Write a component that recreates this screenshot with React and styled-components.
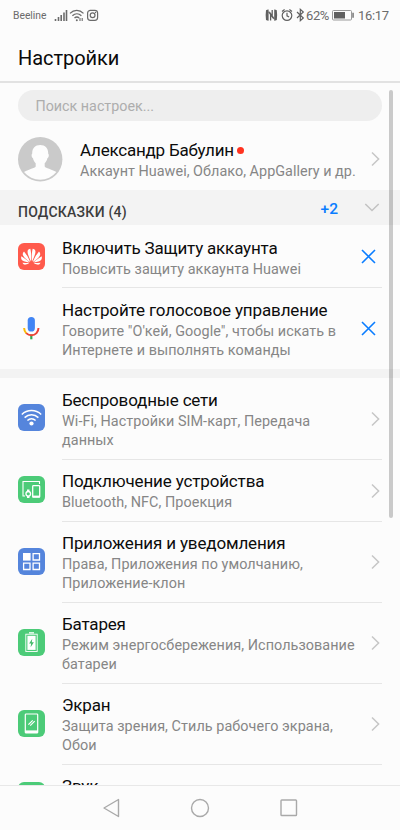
import React from "react";
import styled, { createGlobalStyle } from "styled-components";

const GlobalStyle = createGlobalStyle`
  * { box-sizing: border-box; }
  html, body { margin: 0; padding: 0; }
  body { background: #fcfcfc; font-family: Roboto, "Noto Sans", sans-serif; overflow: hidden; }
  svg { display: block; flex: none; }
`;

const Screen = styled.div`
  position: relative;
  width: 400px;
  height: 830px;
  display: flex;
  flex-direction: column;
  background: #fcfcfc;
  overflow: hidden;
`;

const StatusBar = styled.div`
  height: 30px;
  flex: none;
  display: flex;
  align-items: center;
  justify-content: space-between;
  padding: 0 11px 0 13px;
  color: #6b6b6b;
`;

const StatusGroup = styled.div`
  display: flex;
  align-items: center;
`;

const Carrier = styled.span`
  font-size: 10.3px;
  line-height: 31px;
  width: 41px;
  white-space: nowrap;
`;

const StatusText = styled.span`
  font-size: 13px;
  line-height: 31px;
  width: ${(p) => p.$width}px;
  margin-left: ${(p) => p.$gap || 0}px;
  letter-spacing: ${(p) => p.$spacing || 0}px;
  white-space: nowrap;
`;

const Header = styled.header`
  height: 53px;
  flex: none;
  padding: 15px 18px 0;
  border-bottom: 2px solid #e2e2e2;
`;

const Title = styled.h1`
  margin: 0;
  font-size: 20px;
  line-height: 27px;
  font-weight: 400;
  color: #0a0a0a;
  letter-spacing: -0.05px;
`;

const Content = styled.main`
  flex: 1;
  min-height: 0;
  overflow: hidden;
`;

const SearchField = styled.div`
  height: 31px;
  margin: 7px 18px 0;
  padding: 0 17.5px;
  border-radius: 16px;
  background: #eeeeee;
  color: #adadad;
  font-size: 14.3px;
  line-height: 33px;
`;

const Account = styled.div`
  height: 69px;
  display: flex;
  align-items: center;
  padding: 7px 20px 0 18px;
`;

const AccountText = styled.div`
  flex: 1;
  padding: 1px 0 0 17px;
  white-space: nowrap;
`;

const Dot = styled.span`
  display: inline-block;
  width: 7px;
  height: 7px;
  margin-left: 3px;
  border-radius: 50%;
  background: #ff3320;
  vertical-align: 2px;
`;

const SectionHeader = styled.div`
  height: 35px;
  display: flex;
  align-items: center;
  padding: 0 20px 0 18px;
  background: #f3f3f3;
`;

const SectionTitle = styled.h2`
  flex: 1;
  margin: 0;
  padding-top: 8px;
  color: #3c3c3c;
  font-size: 14px;
  line-height: 20px;
  font-weight: 500;
  letter-spacing: 0.25px;
`;

const Count = styled.span`
  margin-right: 26px;
  padding-top: 2px;
  color: #0a7dff;
  font-size: 15.5px;
  font-weight: 500;
`;

const Band = styled.div`
  height: 9px;
  background: #f3f3f3;
`;

const Row = styled.div`
  height: ${(p) => p.$height}px;
  display: flex;
  padding: 0 18px;
`;

const IconCell = styled.div`
  width: 44px;
  flex: none;
  display: flex;
  align-items: center;
  padding-bottom: ${(p) => p.$lift}px;
`;

const RowBody = styled.div`
  flex: 1;
  display: flex;
  align-items: center;
  justify-content: space-between;
  border-bottom: ${(p) => (p.$last ? "0" : "1px")} solid #e6e6e6;
`;

const RowText = styled.div`
  white-space: nowrap;
  padding-top: ${(p) => p.$shift || 0}px;
  padding-bottom: 1px;
`;

const RowTitle = styled.div`
  color: #0c0c0c;
  font-size: 17px;
  line-height: 24px;
  letter-spacing: ${(p) => p.$spacing ?? -0.18}px;
`;

const RowSubtitle = styled.div`
  min-height: 19px;
  color: #868686;
  font-size: 14.4px;
  line-height: 19px;
  letter-spacing: ${(p) => p.$spacing ?? 0.06}px;
`;

const Tile = styled.div`
  width: 27px;
  height: 27px;
  border-radius: 6px;
  background: ${(p) => p.$color};
`;

const ActionBox = styled.div`
  padding-right: ${(p) => p.$inset}px;
`;

const Scrollbar = styled.div`
  position: absolute;
  top: 90px;
  right: 7px;
  width: 4px;
  height: 428px;
  border-radius: 2px;
  background: rgba(0, 0, 0, 0.2);
`;

const NavBar = styled.nav`
  height: 45px;
  flex: none;
  display: flex;
  align-items: center;
  justify-content: center;
  gap: 69px;
  border-top: 1px solid #e8e8e8;
`;

const StatusIcons = () => (
  <svg width="46" height="14" viewBox="0 0 46 14" fill="none" stroke="#6b6b6b">
    <path d="M1.500 11v2M4.500 9v4M7.200 7v6M10 4.5v8.5M12.500 2v11" strokeWidth="1.6" />
    <path d="M16 5.4c4-4 9.500-4 13.500 0M18.400 7.800c2.700-2.600 6.300-2.600 9 0M20.500 10.100c1.500-1.300 3.300-1.300 4.700 0" strokeWidth="1.3" />
    <circle cx="22.800" cy="12.300" r="1" fill="#6b6b6b" stroke="none" />
    <path d="M26 10v3M28.200 10v3" strokeWidth="1.100" />
    <rect x="33.600" y="2.300" width="10" height="10" rx="2.800" strokeWidth="1.200" />
    <circle cx="38.600" cy="7.300" r="2.400" strokeWidth="1.200" />
    <circle cx="41.500" cy="4.500" r=".7" fill="#6b6b6b" stroke="none" />
  </svg>
);

const SystemIcons = () => (
  <svg width="41" height="14" viewBox="0 0 41 14" fill="none" stroke="#606060">
    <path d="M1 2.200Q2.300 1.500 3.600 1.600V12.700Q2.300 12.700 1 12Q.3 7 1 2.200ZM11.800 2.200Q10.500 1.500 9.200 1.600V12.700Q10.500 12.700 11.800 12Q12.500 7 11.800 2.200Z" fill="#606060" stroke="none" />
    <path d="M5.600 12.400V5.800l3.600 5M7.200 1.900v6.800L3.600 3.600" strokeWidth="1.300" />
    <circle cx="22" cy="7.600" r="4.800" strokeWidth="1.200" />
    <path d="M22 4.800v3l2.100 1.300M17 3.600l2.600-2M27 3.600l-2.600-2" strokeWidth="1.200" />
    <path d="M32 4l6.300 6-3 2.700V1.300l3 2.700L32 10" strokeWidth="1.200" />
  </svg>
);

const BatteryStatus = () => (
  <svg width="22" height="11" viewBox="0 0 22 11">
    <rect x=".5" y=".5" width="19" height="9.500" rx="1" fill="none" stroke="#999" />
    <path d="M2 2h11v6.500H2z" fill="#606060" />
    <path d="M20.400 2.800h1.300v5h-1.300z" fill="#606060" />
  </svg>
);

const Avatar = () => (
  <svg width="45" height="45" viewBox="0 0 45 45">
    <circle cx="22.200" cy="22.200" r="22.200" fill="#cacaca" />
    <path d="M22.200 8c-5.200 0-8.200 3.500-8 8.700-1 .5-.8 3.800.8 4.600.4 2 1.400 3.700 2.700 5v3.300c-1.200 1.800-6.500 2.600-11.700 5.500a21 21 0 0 0 32.400 0c-5.200-2.900-10.500-3.700-11.700-5.500v-3.300c1.300-1.300 2.300-3 2.700-5 1.600-.8 1.800-4.100.8-4.600.2-5.200-2.800-8.700-8-8.700Z" fill="#fdfdfd" />
  </svg>
);

const Chevron = () => (
  <svg width="9" height="16" viewBox="0 0 9 16" fill="none" stroke="#c6c6c6" strokeWidth="1.500">
    <path d="M1 1.500 7.600 8 1 14.500" />
  </svg>
);

const ChevronDown = () => (
  <svg width="16" height="10" viewBox="0 0 16 10" fill="none" stroke="#c2c2c2" strokeWidth="1.500">
    <path d="M1.300 1 8 7.500 14.700 1" />
  </svg>
);

const Close = () => (
  <svg width="15" height="15" viewBox="0 0 15 15" fill="none" stroke="#0a7dff" strokeWidth="1.600">
    <path d="m1 1 13 13M14 1 1 14" />
  </svg>
);

const HuaweiIcon = () => (
  <svg width="27" height="27" viewBox="0 0 27 27" fill="#fff">
    {["", "translate(27 0) scale(-1 1)"].map((transform) => (
      <g key={transform} transform={transform}>
        <path d="M13 18.600C11.300 15 9.300 10.500 9.600 8.200 9.800 6.600 11 5.900 12.300 5.800 13.200 8.500 13.500 14.500 13 18.600Z" />
        <path d="M12.200 19C11.200 16.200 8.700 11.500 6 8.400 4.800 9.500 4.400 10.900 5.100 12.400 6 14.500 9.500 17.300 12.200 19Z" />
        <path d="M11.500 19.400C9 17 5.500 14.600 3.300 13.300 2.900 15 3.200 16.600 4.500 17.600 6.100 18.900 9 19.300 11.500 19.400Z" />
        <path d="M11.300 20C9 20 6.500 19.900 4.400 19.800 5.200 21.200 6.300 21.900 7.700 21.600 9 21.400 10.300 20.700 11.300 20Z" />
      </g>
    ))}
  </svg>
);

const MicIcon = () => (
  <svg width="27" height="27" viewBox="0 0 27 27" fill="none">
    <rect x="9.700" y="2" width="7.200" height="14.500" rx="3.600" fill="#4285f4" />
    <path d="M12.200 19.500h2.200v4.800h-2.200z" fill="#34a853" />
    <path d="M6.100 13c.1 2.200.8 3.900 2.200 5.200" stroke="#fbbc05" strokeWidth="2" />
    <path d="M8.200 18.100c3 2.900 7.600 2.900 10.300 0 1.200-1.300 1.900-3 2-5.100" stroke="#ea4335" strokeWidth="2" />
  </svg>
);

const WifiIcon = () => (
  <svg width="27" height="27" viewBox="0 0 27 27" fill="none" stroke="#fff" strokeWidth="1.500">
    <path d="M3.800 10.500c5.500-5.200 13.900-5.200 19.400 0M6.600 13.600c3.900-3.700 9.900-3.700 13.800 0M9.400 16.500c2.400-2.200 5.800-2.200 8.200 0" />
    <circle cx="13.500" cy="19.500" r="2.100" fill="#fff" stroke="none" />
  </svg>
);

const DevicesIcon = () => (
  <svg width="27" height="27" viewBox="0 0 27 27" fill="none" stroke="#fff">
    <path d="M7 20H5V5.500h16.500V8" strokeWidth="1.100" />
    <rect x="14.700" y="9.700" width="7" height="11.500" rx=".7" strokeWidth="1.300" />
    <path d="M14.500 20.500h7.400" strokeWidth="1.800" />
    <path d="M9 13.500h2.500V22H9z" fill="#fff" stroke="none" />
    <circle cx="10.250" cy="17.800" r="2.300" fill="#4ccb78" strokeWidth="1.300" />
  </svg>
);

const AppsIcon = () => (
  <svg width="27" height="27" viewBox="0 0 27 27" fill="none" stroke="#fff" strokeWidth="1.300">
    <path d="M5 5h7.600v7.600H5z" fill="#fff" stroke="none" />
    <path d="M15.100 5.600h6.400V12h-6.400zM5.600 15.100H12v6.400H5.600zM15.100 15.100h6.400v6.400h-6.400z" />
  </svg>
);

const BatteryIcon = () => (
  <svg width="27" height="27" viewBox="0 0 27 27">
    <path d="M11 3.200h5v1.300h-5z" fill="#fff" />
    <rect x="7.800" y="5.200" width="11.400" height="17.300" fill="none" stroke="#fff" strokeWidth=".9" />
    <path d="M9.400 6.800h8.200v14.100H9.400z" fill="#fff" />
    <path d="m14.300 9.800-3.200 4.600h2l-.5 3.900 3.300-5h-2.100z" fill="#43ba69" />
  </svg>
);

const DisplayIcon = () => (
  <svg width="27" height="27" viewBox="0 0 27 27" fill="none" stroke="#fff">
    <rect x="7.300" y="4" width="12.400" height="19" rx=".8" strokeWidth="1.200" />
    <path d="M7 21.700h13" strokeWidth="2.600" />
    <path d="m10.400 14.700 4.300-4.300M12.200 15.700l4.500-4.500" strokeWidth="1.200" />
  </svg>
);

const BLUE = "#5585dc";
const GREEN = "#4ccb78";

const tips = [
  { title: "Включить Защиту аккаунта", lines: ["Повысить защиту аккаунта Huawei"], height: 63, color: "#ff5a4c", Icon: HuaweiIcon, shift: 3, lift: 0 },
  { title: "Настройте голосовое управление", spacing: -0.13, lines: ["Говорите \"О'кей, Google\", чтобы искать в", "Интернете и выполнять команды"], height: 81, color: "transparent", Icon: MicIcon, last: true, shift: 1, lift: 1 },
];

const settings = [
  { title: "Беспроводные сети", lines: ["Wi-Fi, Настройки SIM-карт, Передача", "данных"], height: 82, color: BLUE, Icon: WifiIcon, shift: 1, lift: 3 },
  { title: "Подключение устройства", spacing: -0.15, lines: ["Bluetooth, NFC, Проекция"], height: 62, color: GREEN, Icon: DevicesIcon, lift: 3 },
  { title: "Приложения и уведомления", spacing: -0.15, lines: ["Права, Приложения по умолчанию,", "Приложение-клон"], height: 81, color: BLUE, Icon: AppsIcon, lift: 2 },
  { title: "Батарея", lines: ["Режим энергосбережения, Использование", "батареи"], height: 81, color: GREEN, Icon: BatteryIcon, shift: 1, lift: 2 },
  { title: "Экран", lines: ["Защита зрения, Стиль рабочего экрана,", "Обои"], height: 81, color: GREEN, Icon: DisplayIcon, shift: 1, lift: 2 },
  { title: "Звук", lines: [], height: 62, color: GREEN, lift: 2 },
];

const SettingRow = ({ item, inset, children }) => (
  <Row $height={item.height}>
    <IconCell $lift={item.lift}>
      <Tile $color={item.color}>{item.Icon && <item.Icon />}</Tile>
    </IconCell>
    <RowBody $last={item.last}>
      <RowText $shift={item.shift}>
        <RowTitle $spacing={item.spacing}>{item.title}</RowTitle>
        <RowSubtitle>
          {item.lines.map((line) => (
            <div key={line}>{line}</div>
          ))}
        </RowSubtitle>
      </RowText>
      <ActionBox $inset={inset}>{children}</ActionBox>
    </RowBody>
  </Row>
);

export default function App() {
  return (
    <Screen>
      <GlobalStyle />
      <StatusBar>
        <StatusGroup>
          <Carrier>Beeline</Carrier>
          <StatusIcons />
        </StatusGroup>
        <StatusGroup>
          <SystemIcons />
          <StatusText $width={26} $spacing={-0.4}>62%</StatusText>
          <BatteryStatus />
          <StatusText $width={31} $gap={4} $spacing={-0.3}>16:17</StatusText>
        </StatusGroup>
      </StatusBar>
      <Header>
        <Title>Настройки</Title>
      </Header>
      <Content>
        <SearchField>Поиск настроек...</SearchField>
        <Account>
          <Avatar />
          <AccountText>
            <RowTitle $spacing={-0.22}>
              Александр Бабулин
              <Dot />
            </RowTitle>
            <RowSubtitle $spacing={0.03}>Аккаунт Huawei, Облако, AppGallery и др.</RowSubtitle>
          </AccountText>
          <Chevron />
        </Account>
        <SectionHeader>
          <SectionTitle>ПОДСКАЗКИ (4)</SectionTitle>
          <Count>+2</Count>
          <ChevronDown />
        </SectionHeader>
        {tips.map((item) => (
          <SettingRow key={item.title} item={item} inset={6}>
            <Close />
          </SettingRow>
        ))}
        <Band />
        {settings.map((item) => (
          <SettingRow key={item.title} item={item} inset={2}>
            <Chevron />
          </SettingRow>
        ))}
      </Content>
      <NavBar>
        <svg width="20" height="20" viewBox="0 0 20 20" fill="none" stroke="#a9a9a9" strokeWidth="1.400" strokeLinejoin="round">
          <path d="M17.500 1.500v17L3 10z" />
        </svg>
        <svg width="20" height="20" viewBox="0 0 20 20" fill="none" stroke="#a9a9a9" strokeWidth="1.400">
          <circle cx="10" cy="10" r="8.500" />
        </svg>
        <svg width="20" height="20" viewBox="0 0 20 20" fill="none" stroke="#a9a9a9" strokeWidth="1.400">
          <rect x="2" y="2" width="15.500" height="15.500" rx=".8" />
        </svg>
      </NavBar>
      <Scrollbar />
    </Screen>
  );
}
